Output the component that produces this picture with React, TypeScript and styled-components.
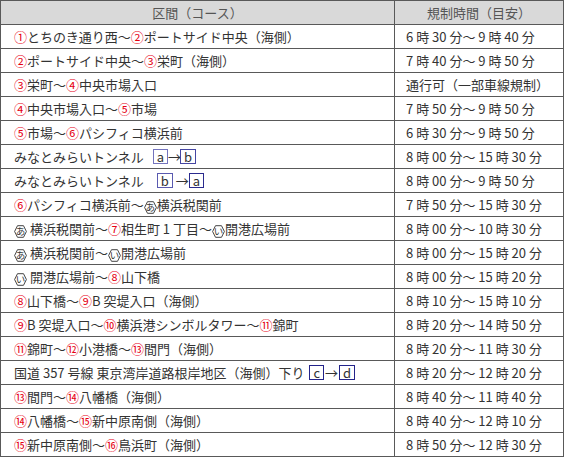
import React from "react";
import styled, { createGlobalStyle } from "styled-components";

const Global = createGlobalStyle`
  html, body { margin: 0; padding: 0; background: #fff; }
  body { font-family: "Noto Sans CJK JP", "Noto Sans", sans-serif; }
`;

const Table = styled.table`
  width: 564px;
  border-collapse: collapse;
  table-layout: fixed;
  font-size: 13px;
  color: #333;
`;

const HeadCell = styled.th<{ $w?: number }>`
  background: #d9d9d9;
  color: #555;
  font-weight: normal;
  text-align: center;
  border: 1px solid #595959;
  height: 23px;
  padding: 0;
  ${(p) => (p.$w ? `width: ${p.$w}px;` : "")}
`;

const Cell = styled.td<{ $pad: number }>`
  border: 1px solid #595959;
  height: 23px;
  padding: 0 0 0 ${(p) => p.$pad}px;
  white-space: nowrap;
  line-height: 23px;
  overflow: hidden;
`;

const Num = styled.span`
  color: #e60012;
`;

const HexWrap = styled.span`
  position: relative;
  display: inline-flex;
  align-items: center;
  justify-content: center;
  width: 13px;
  height: 13px;
  vertical-align: -1px;
  font-size: 9.5px;
  line-height: 1;
  color: #333;
  & > svg {
    position: absolute;
    inset: 0;
  }
`;

const HexText = styled.span`
  position: relative;
`;

const Box = styled.span<{ $c: string; $ml?: number; $mr?: number }>`
  display: inline-block;
  border: 1px solid ${(p) => p.$c};
  padding: 0 3px;
  line-height: 13px;
  margin-left: ${(p) => p.$ml ?? 1}px;
  margin-right: ${(p) => p.$mr ?? 1}px;
`;

const Arrow = styled.span`
  display: inline-block;
  width: 12px;
  text-align: center;
`;

const Hex = ({ ch }: { ch: string }) => (
  <HexWrap>
    <svg width="13" height="13" viewBox="0 0 13 13">
      <polygon
        points="3.5,0.7 9.5,0.7 12.4,6.5 9.5,12.3 3.5,12.3 0.6,6.5"
        fill="none"
        stroke="#444"
        strokeWidth="1"
      />
    </svg>
    <HexText>{ch}</HexText>
  </HexWrap>
);

const N = ({ c }: { c: string }) => <Num>{c}</Num>;

type Row = { course: React.ReactNode; time: string };

const rows: Row[] = [
  { course: <><N c="①" />とちのき通り西～<N c="②" />ポートサイド中央（海側）</>, time: "6 時 30 分～ 9 時 40 分" },
  { course: <><N c="②" />ポートサイド中央～<N c="③" />栄町（海側）</>, time: "7 時 40 分～ 9 時 50 分" },
  { course: <><N c="③" />栄町～<N c="④" />中央市場入口</>, time: "通行可（一部車線規制）" },
  { course: <><N c="④" />中央市場入口～<N c="⑤" />市場</>, time: "7 時 50 分～ 9 時 50 分" },
  { course: <><N c="⑤" />市場～<N c="⑥" />パシフィコ横浜前</>, time: "6 時 30 分～ 9 時 50 分" },
  {
    course: (
      <>
        みなとみらいトンネル
        <Box $c="#7474bd" $ml={9} $mr={0}>a</Box>
        <Arrow>→</Arrow>
        <Box $c="#4646a2" $ml={0}>b</Box>
      </>
    ),
    time: "8 時 00 分～ 15 時 30 分",
  },
  {
    course: (
      <>
        みなとみらいトンネル
        <Box $c="#5a5ab0" $ml={13} $mr={3}>b</Box>
        <Arrow>→</Arrow>
        <Box $c="#2b2b8e" $ml={1}>a</Box>
      </>
    ),
    time: "8 時 00 分～ 9 時 50 分",
  },
  { course: <><N c="⑥" />パシフィコ横浜前～<Hex ch="あ" />横浜税関前</>, time: "7 時 50 分～ 15 時 30 分" },
  { course: <><Hex ch="あ" /> 横浜税関前～<N c="⑦" />相生町 1 丁目～<Hex ch="い" />開港広場前</>, time: "8 時 00 分～ 10 時 30 分" },
  { course: <><Hex ch="あ" /> 横浜税関前～<Hex ch="い" />開港広場前</>, time: "8 時 00 分～ 15 時 20 分" },
  { course: <><Hex ch="い" /> 開港広場前～<N c="⑧" />山下橋</>, time: "8 時 00 分～ 15 時 20 分" },
  { course: <><N c="⑧" />山下橋～<N c="⑨" />B 突堤入口（海側）</>, time: "8 時 10 分～ 15 時 10 分" },
  { course: <><N c="⑨" />B 突堤入口～<N c="⑩" />横浜港シンボルタワー～<N c="⑪" />錦町</>, time: "8 時 20 分～ 14 時 50 分" },
  { course: <><N c="⑪" />錦町～<N c="⑫" />小港橋～<N c="⑬" />間門（海側）</>, time: "8 時 20 分～ 11 時 30 分" },
  {
    course: (
      <>
        国道 357 号線 東京湾岸道路根岸地区（海側）下り
        <Box $c="#23238a" $ml={5} $mr={1}>c</Box>
        <Arrow>→</Arrow>
        <Box $c="#23238a" $ml={2}>d</Box>
      </>
    ),
    time: "8 時 20 分～ 12 時 20 分",
  },
  { course: <><N c="⑬" />間門～<N c="⑭" />八幡橋（海側）</>, time: "8 時 40 分～ 11 時 40 分" },
  { course: <><N c="⑭" />八幡橋～<N c="⑮" />新中原南側（海側）</>, time: "8 時 40 分～ 12 時 10 分" },
  { course: <><N c="⑮" />新中原南側～<N c="⑯" />鳥浜町（海側）</>, time: "8 時 50 分～ 12 時 30 分" },
];

export default function App() {
  return (
    <>
      <Global />
      <Table>
        <thead>
          <tr>
            <HeadCell $w={393}>区間（コース）</HeadCell>
            <HeadCell>規制時間（目安）</HeadCell>
          </tr>
        </thead>
        <tbody>
          {rows.map((r, i) => (
            <tr key={i}>
              <Cell $pad={13}>{r.course}</Cell>
              <Cell $pad={11}>{r.time}</Cell>
            </tr>
          ))}
        </tbody>
      </Table>
    </>
  );
}
